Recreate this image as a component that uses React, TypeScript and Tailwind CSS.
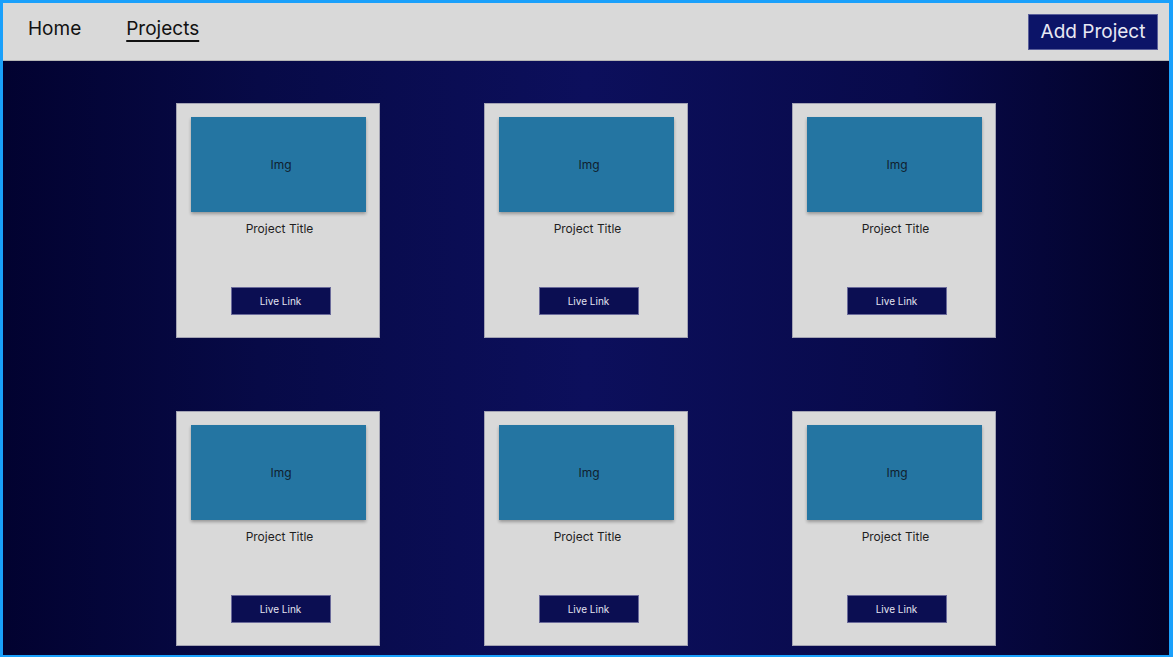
import React from "react";

function Card() {
  return (
    <div className="w-[204px] h-[235px] bg-[#d9d9d9] border border-[#a3a3b3] flex flex-col">
      <div className="mt-[13px] ml-[14px] w-[175px] h-[95px] bg-[#2475a2] shadow-[0_2px_3px_rgba(0,0,0,0.3)] flex items-center justify-center text-[12px] text-[#10202e] pl-[6px]">
        Img
      </div>
      <div className="mt-[9px] pl-[4px] text-center text-[12px] leading-[16px] text-[#1f1f1f]">Project Title</div>
      <div className="mt-[50px] ml-[54px] w-[100px] h-[28px] bg-[#0b0e52] border border-[#6a6a9a] flex items-center justify-center text-[10px] text-[#e4e4f0]">
        Live Link
      </div>
    </div>
  );
}

export default function App() {
  return (
    <div
      className="w-[1173px] h-[657px] border-[3px] border-r-[4px] border-b-[2px] border-[#1aa0fb] flex flex-col overflow-hidden"
      style={{ fontFamily: "Inter, 'Noto Sans', sans-serif" }}
    >
      <header className="h-[58px] shrink-0 bg-[#d9d9d9] border-b border-[#b5b5b5] flex items-center pl-[25px] pr-[11px]">
        <nav className="flex items-center gap-[45px] text-[19px] text-[#111] -mt-[4px]">
          <span>Home</span>
          <span className="underline underline-offset-[5px] decoration-[1.5px]">Projects</span>
        </nav>
        <button className="ml-auto w-[130px] h-[36px] bg-[#0c1468] border border-[#5a5f9a] text-[19px] leading-none text-[#e8e8f4] flex items-center justify-center">
          Add Project
        </button>
      </header>
      <main className="flex-1 bg-[linear-gradient(to_right,#020230_0%,#070a47_22%,#0c0f5c_50%,#080a4a_78%,#020228_100%)] flex justify-center pt-[42px] pr-[1px]">
        <div className="grid grid-cols-[204px_204px_204px] gap-x-[104px] gap-y-[73px] h-fit">
          <Card />
          <Card />
          <Card />
          <Card />
          <Card />
          <Card />
        </div>
      </main>
    </div>
  );
}
